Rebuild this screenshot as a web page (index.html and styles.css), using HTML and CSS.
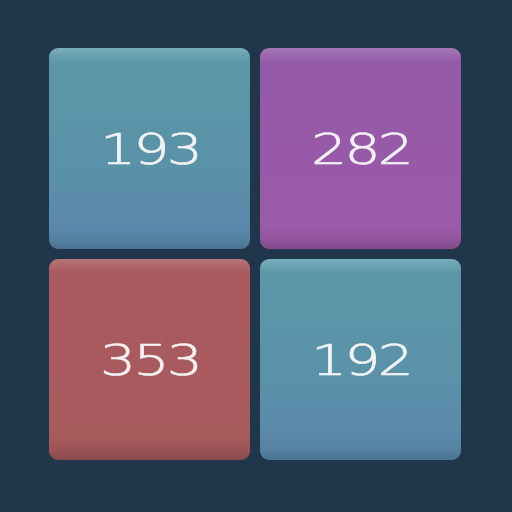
FILE: index.html
```html
<!DOCTYPE html>
<html>
<head>
<meta charset="utf-8">
<link rel="stylesheet" href="styles.css">
</head>
<body>
<div class="board">
  <div class="tile teal"><span class="num">193</span></div>
  <div class="tile purple"><span class="num">282</span></div>
  <div class="tile red"><span class="num">353</span></div>
  <div class="tile teal"><span class="num">192</span></div>
</div>
</body>
</html>
```
FILE: styles.css
```css
html, body {
  margin: 0;
  padding: 0;
  background: #1f364b;
  width: 512px;
  height: 512px;
  overflow: hidden;
}
.board {
  display: grid;
  grid-template-columns: 201px 201px;
  grid-template-rows: 201px 201px;
  gap: 10px;
  padding: 48px 0 0 49px;
}
.tile {
  border-radius: 9px;
  display: flex;
  align-items: center;
  justify-content: center;
}
.teal {
  background: linear-gradient(to bottom, #79adbd 0px, #5b97a7 14px, #5a92a9 60%, #5b88aa 178px, #5683a3 190px, #4a7390 201px);
}
.purple {
  background: linear-gradient(to bottom, #a577b5 0px, #945aa7 14px, #985aa8 60%, #9c5aa8 178px, #9455a0 190px, #824b8c 201px);
}
.red {
  background: linear-gradient(to bottom, #b87377 0px, #a85a5f 14px, #a85a5e 60%, #a75a5c 178px, #9d5557 190px, #8a4a4c 201px);
}
.num {
  font-family: "DejaVu Sans", sans-serif;
  font-weight: 200;
  font-size: 42px;
  color: #f2f2f2;
  -webkit-text-stroke: 0.6px #f2f2f2;
  letter-spacing: -2px;
  margin-right: -2px;
  margin-top: 3px;
  line-height: 1;
  transform: scaleX(1.35);
}
```
